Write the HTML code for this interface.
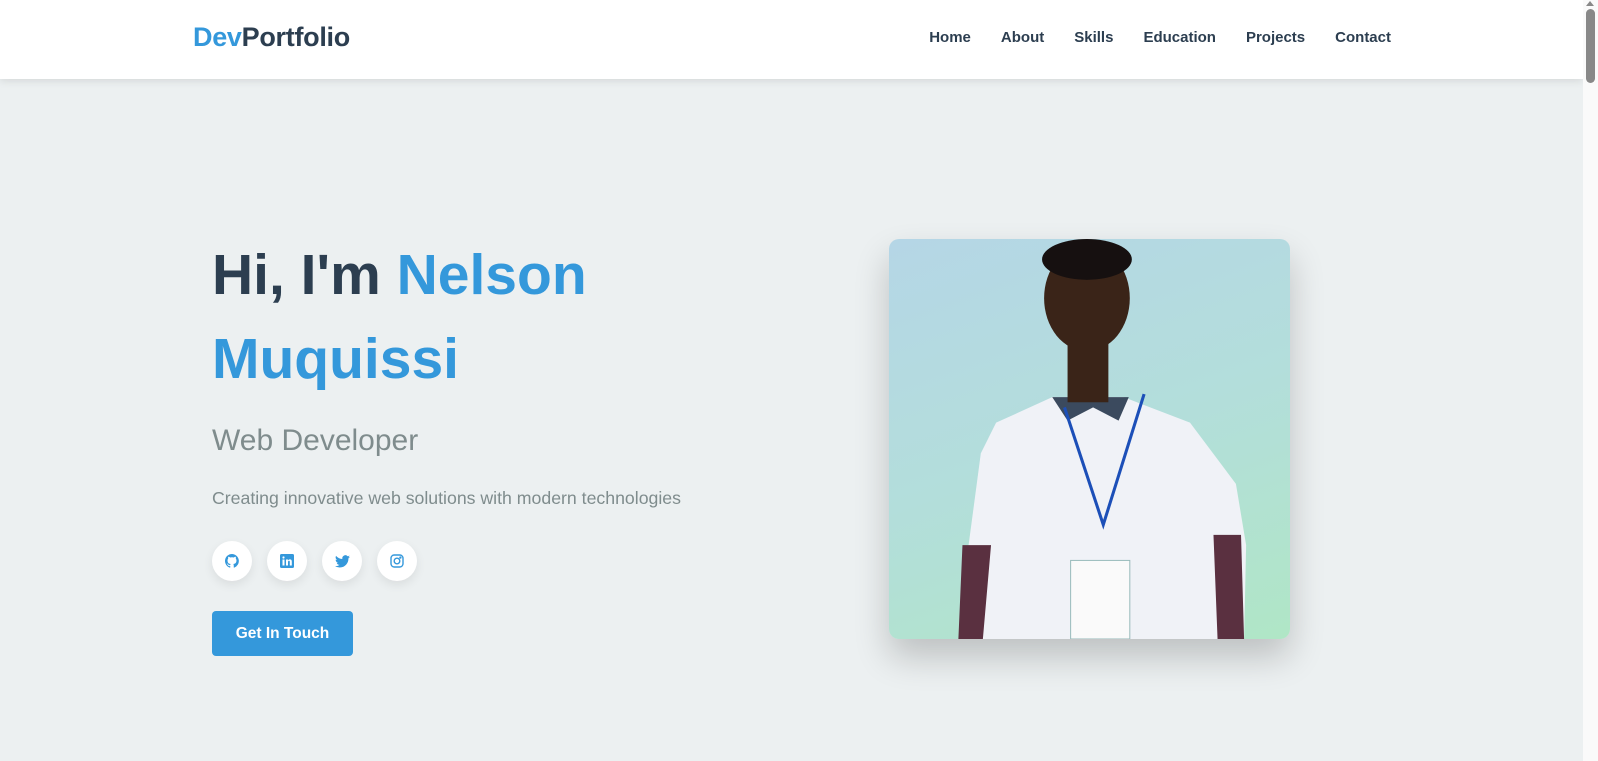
<!DOCTYPE html>
<html><head><meta charset="utf-8"><style>
*{margin:0;padding:0;box-sizing:border-box}
html,body{width:1598px;height:761px;overflow:hidden;background:#ecf0f1;font-family:"Liberation Sans",sans-serif}
.sb{position:absolute;right:0;top:0;width:15px;height:761px;background:#fafafa}
.sb i{position:absolute;left:3px;top:9px;width:9px;height:74px;background:#888;border-radius:5px}
.sb b{position:absolute;left:3px;top:1px;border:4px solid transparent;border-bottom:5px solid #888;border-top:0}
nav{position:absolute;left:0;top:0;width:1583px;height:79px;background:#fff;box-shadow:0 2px 8px rgba(0,0,0,.1)}
.logo{position:absolute;left:193px;top:22px;font-size:27px;font-weight:bold;color:#2c3e50;letter-spacing:-.3px}
.logo span{color:#3498db}
.links{position:absolute;top:29px;right:192px;display:flex;gap:30px;font-size:15px;color:#2c3e50;font-weight:bold}
h1{position:absolute;left:212px;top:233px;font-size:57px;line-height:84px;color:#2c3e50;font-weight:bold;width:520px}
h1 span{color:#3498db}
h2{position:absolute;left:212px;top:424px;font-size:30px;font-weight:normal;color:#7f8c8d}
p{position:absolute;left:212px;top:488px;font-size:17.7px;color:#7f8c8d}
.soc{position:absolute;left:212px;top:541px;display:flex;gap:15px}
.soc div{width:40px;height:40px;border-radius:50%;background:#fff;box-shadow:0 4px 10px rgba(0,0,0,.08);display:flex;align-items:center;justify-content:center}
.btn{position:absolute;left:212px;top:611px;width:141px;height:45px;background:#3498db;color:#fff;border-radius:4px;font-size:15.5px;font-weight:bold;text-align:center;line-height:45px}
.photo{position:absolute;left:889px;top:239px;width:401px;height:400px;border-radius:10px;overflow:hidden;background:linear-gradient(160deg,#b5d6e6 0%,#b3dedb 50%,#b0e6c6 100%);box-shadow:0 18px 35px rgba(0,0,0,.2)}
</style></head><body>
<nav><div class="logo"><span>Dev</span>Portfolio</div>
<div class="links"><span>Home</span><span>About</span><span>Skills</span><span>Education</span><span>Projects</span><span>Contact</span></div></nav>
<h1>Hi, I'm <span>Nelson Muquissi</span></h1>
<h2>Web Developer</h2>
<p>Creating innovative web solutions with modern technologies</p>
<div class="soc">
<div><svg width="14" height="14" viewBox="0 0 16 16"><path fill="#3498db" d="M8 0a8 8 0 0 0-2.5 15.6c.4 0 .5-.2.5-.4v-1.5c-2.2.5-2.7-1-2.7-1-.4-.9-.9-1.2-.9-1.2-.7-.5.1-.5.1-.5.8.1 1.2.8 1.2.8.7 1.3 1.9.9 2.3.7.1-.5.3-.9.5-1.1-1.8-.2-3.6-.9-3.6-4 0-.9.3-1.6.8-2.1-.1-.2-.4-1 .1-2.1 0 0 .7-.2 2.2.8a7.5 7.5 0 0 1 4 0c1.5-1 2.2-.8 2.2-.8.4 1.1.2 1.9.1 2.1.5.6.8 1.3.8 2.1 0 3.1-1.9 3.8-3.6 4 .3.3.5.8.5 1.5v2.2c0 .2.1.5.6.4A8 8 0 0 0 8 0z"/></svg></div>
<div><svg width="14" height="14" viewBox="0 0 14 14"><rect width="14" height="14" rx="1.5" fill="#3498db"/><rect x="2.5" y="5.5" width="2" height="6" fill="#fff"/><circle cx="3.5" cy="3.5" r="1.1" fill="#fff"/><path d="M6 5.5h2v1c.5-.9 1.3-1.1 2-1.1 1.4 0 1.8.9 1.8 2.3v3.8h-2V8c0-.8-.2-1.2-.8-1.2S8 7.3 8 8v3.5H6z" fill="#fff"/></svg></div>
<div><svg width="15" height="13" viewBox="0 0 24 20"><path fill="#3498db" d="M24 2.4a10 10 0 0 1-2.8.8A5 5 0 0 0 23.3.4a10 10 0 0 1-3.1 1.2A4.9 4.9 0 0 0 11.8 6 14 14 0 0 1 1.7.9a4.9 4.9 0 0 0 1.5 6.6 4.9 4.9 0 0 1-2.2-.6 4.9 4.9 0 0 0 3.9 4.9 4.9 4.9 0 0 1-2.2.1 4.9 4.9 0 0 0 4.6 3.4A9.9 9.9 0 0 1 0 17.3 14 14 0 0 0 7.5 19.5c9.1 0 14-7.5 14-14v-.6A10 10 0 0 0 24 2.4z"/></svg></div>
<div><svg width="14" height="14" viewBox="0 0 14 14" fill="none" stroke="#3498db" stroke-width="1.4"><rect x="1" y="1" width="12" height="12" rx="3.2"/><circle cx="7" cy="7" r="2.8"/><circle cx="10.4" cy="3.6" r=".5" fill="#3498db"/></svg></div>
</div>
<div class="btn">Get In Touch</div>
<div class="photo"><svg width="401" height="400" viewBox="0 0 393 392">
<path d="M70 392 L78 300 L90 210 L105 180 L160 155 L230 155 L295 180 L340 240 L350 300 L348 392Z" fill="#f0f2f7"/>
<path d="M72 300 L100 300 L92 392 L68 392Z M318 290 L345 290 L348 392 L322 392Z" fill="#5a3040"/>
<path d="M160 155 L175 178 L200 165 L225 178 L235 155Z" fill="#3b4a5e"/>
<path d="M172 165 L210 280 L250 152" fill="none" stroke="#1c4fb8" stroke-width="3"/>
<rect x="178" y="315" width="58" height="77" fill="#fafafa" stroke="#9bb"/>
<ellipse cx="194" cy="58" rx="42" ry="52" fill="#3a2418"/>
<rect x="175" y="100" width="40" height="60" fill="#3a2418"/>
<ellipse cx="194" cy="20" rx="44" ry="20" fill="#161010"/>
</svg></div>
<div class="sb"><b></b><i></i></div>
</body></html>
